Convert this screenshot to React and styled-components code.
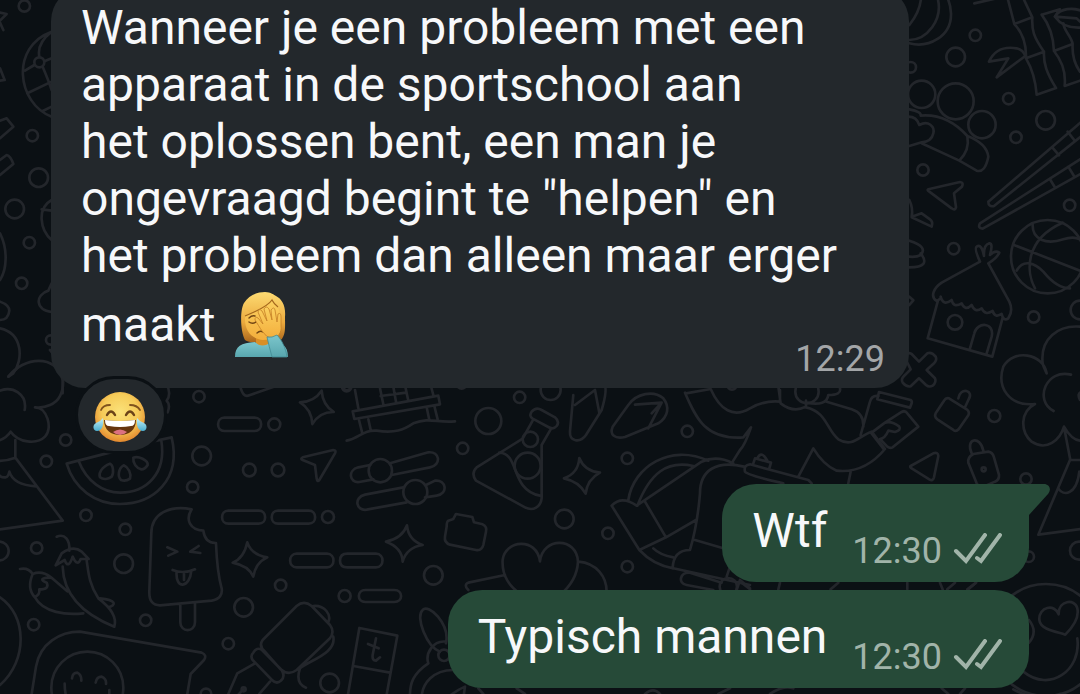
import styled, { createGlobalStyle } from "styled-components";

const GlobalStyle = createGlobalStyle`
  * {
    box-sizing: border-box;
  }

  body {
    margin: 0;
    background: #0b1014;
    font-family: Roboto, "Noto Sans", sans-serif;
  }
`;

const Chat = styled.main`
  position: relative;
  display: flex;
  flex-direction: column;
  justify-content: flex-end;
  height: 100vh;
  padding: 0 51px 6px;
  overflow: hidden;
`;

const Wallpaper = styled.svg`
  position: absolute;
  inset: 0;
  width: 100%;
  height: 100%;
  fill: none;
  stroke: #23262b;
  stroke-width: 8;
  stroke-linecap: round;
  stroke-linejoin: round;
`;

const Bubble = styled.article`
  position: relative;
  display: flex;
  flex-shrink: 0;
  border-radius: 34px;
  color: #f7f8fa;
`;

const Incoming = styled(Bubble)`
  flex-direction: column;
  margin-right: 120px;
  padding: 12px 24px 8px 30px;
  background: #23282c;
`;

const Outgoing = styled(Bubble)`
  align-self: flex-end;
  align-items: flex-end;
  gap: 25px;
  margin-top: 8px;
  padding: 18px 27px 23px 30px;
  background: #264a38;

  &.first {
    margin-top: 30px;
    border-top-right-radius: 0;
  }
`;

const Text = styled.p`
  margin: 0;
  font-size: 48px;
  line-height: 57px;
`;

const Line = styled.span`
  display: block;
`;

const Time = styled.time`
  color: #a1b4a9;
  font-size: 36px;
  line-height: 42px;
`;

const FloatingTime = styled(Time)`
  float: right;
  margin-top: 54px;
  color: #a3a6a8;
`;

const Meta = styled.footer`
  display: flex;
  align-items: center;
  gap: 11px;
  margin-bottom: -13px;
  color: #a1b4a9;
`;

const Tail = styled.svg`
  position: absolute;
  top: 0;
  left: 100%;
  width: 21px;
  height: 31px;
  fill: #264a38;
`;

const Ticks = styled.svg`
  width: 49px;
  height: 36px;
  fill: none;
  stroke: currentColor;
  stroke-width: 4;
  stroke-linecap: round;
`;

const Reaction = styled.button`
  position: relative;
  display: flex;
  flex-shrink: 0;
  align-self: flex-start;
  align-items: center;
  justify-content: center;
  width: 92px;
  height: 78px;
  margin: -12px 0 0 24px;
  padding: 3px 3px 0 0;
  border: 3px solid #0b1014;
  border-radius: 39px;
  background: #23282c;
`;

const FaceEmoji = styled.svg`
  width: 54px;
  height: 66px;
  margin: 8px 0 0 8px;
  vertical-align: -17px;
`;

const doodles = [
  {
    // lower left: melon, peppers, ice lolly, marker, speech bubble
    at: [0, 370],
    circles: [
      [597, 80, 17], [823, 163, 18], [605, 258, 28], [748, 300, 19], [834, 300, 19],
      [578, 351, 17], [197, 210, 17], [139, 274, 17], [258, 436, 17], [376, 478, 17],
      [110, 534, 17], [371, 581, 28], [-2, 543, 28], [101, 764, 17], [437, 751, 17],
      [731, 712, 28], [842, 646, 17], [1034, 678, 18], [984, 441, 18], [685, 821, 17],
      [989, 939, 28], [262, 953, 108], [618, 972, 16], [731, 958, 6],
    ],
    paths: [
      "M25 20L55 -8M150 -60C200 -10 205 85 150 105Q128 115 105 112C140 110 160 175 135 200C110 225 55 218 32 185Q15 210 -20 216",
      "M-10 66C40 42 82 75 74 120M46 210V263L188 452L0 478M-10 273Q20 273 46 263M-10 305Q0 325 17 322Q25 320 28 305Q40 345 108 349",
      "M200 281L340 245M470 212L515 202C545 330 460 402 360 402C285 402 222 355 200 281ZM236 273C260 335 310 368 360 368C440 368 500 310 484 212",
      "M330 281C305 290 295 310 300 322C310 330 325 328 335 320C342 310 340 285 330 281ZM371 286C355 295 352 320 363 330Q377 335 390 326C395 310 385 292 371 286ZM400 263C415 257 445 270 443 285Q435 298 424 298C410 295 398 280 400 263Z",
      "M498 40Q516 70 500 92Q512 105 503 127M720 45Q728 85 748 76L828 48M1025 45Q1040 75 1055 50",
      "M965 62Q968 105 1001 126Q960 125 937 162Q935 118 900 97Q943 95 965 62ZM742 517Q755 555 802 562Q767 578 760 620Q745 587 698 578Q732 565 742 517Z",
      "M673 143H764C790 143 790 183 764 183H673C648 183 648 143 673 143ZM685 422H776C802 422 802 461 776 461H685C660 461 660 422 685 422ZM834 422H926C952 422 952 461 926 461H834C809 461 809 422 834 422ZM890 551H981C1007 551 1007 592 981 592H890C864 592 864 551 890 551Z",
      "M908 262L1000 240Q1010 240 1005 250L958 330Q952 338 950 325L945 285L908 270Q900 266 908 262Z",
      "M575 418C510 405 454 430 454 490L448 665C447 695 460 706 480 706L635 692C660 688 668 672 665 655C655 620 650 570 648 519Q615 520 610 482C570 480 555 450 575 418ZM541 703V757C541 788 585 788 585 757V698M502 532L532 545L505 557M596 528L571 545L601 549M518 600Q550 613 585 598M530 604C525 660 570 655 574 602M552 612V630",
      "M170 500C195 490 210 510 208 542M167 586L185 550Q220 525 245 545L266 567H242Q232 592 218 560Q205 600 194 570ZM188 590C190 660 230 725 343 770Q355 730 295 685C265 640 265 600 260 572M300 685C350 690 350 705 325 712M60 597Q85 592 98 612M98 612C120 603 140 612 153 622Q108 625 140 638Q150 658 118 658Q120 675 104 681Q80 655 98 612ZM153 622L202 664M104 681C130 730 200 735 250 730",
      "M95 972L108 890C120 820 180 785 240 785L605 848Q622 855 612 870L572 912L562 972M216 925Q218 908 232 908Q245 915 244 932M287 938Q290 920 305 920Q320 927 318 942M194 941Q194 965 200 985M328 960V985",
      "M788 810L890 708Q912 690 935 708L990 765Q1005 785 990 805L890 900Q865 918 842 898L795 845Q775 828 788 810ZM760 848Q770 830 786 840L845 900Q857 920 843 932Q830 944 816 930L758 870Q750 858 760 848ZM940 708C975 705 995 735 985 757M1000 800C1010 850 930 870 900 895Q885 940 918 953M765 880L712 910L685 972M810 935L778 972M730 958L705 985",
      "M0 682C80 735 85 870 0 945",
    ],
  },
  {
    // middle: hut on stilts, sliders, flask, slippers
    at: [340, 370],
    circles: [
      [539, 82, 17], [445, 153, 39], [368, 235, 17], [571, 208, 23], [563, 287, 39],
      [121, 302, 35], [226, 366, 36], [673, 447, 28], [280, 616, 28], [632, 60, 30],
      [1042, 184, 17], [862, 265, 17], [804, 490, 17], [862, 590, 17],
      [312, 856, 17], [20, 50, 14], [365, 42, 14],
    ],
    paths: [
      "M38 124L295 77L300 103L43 147ZM45 60L55 115M120 55L130 103M160 50L168 95M196 50L204 88M272 45L280 75M122 78L198 68M57 150L67 190M85 148L92 180M260 112L268 150M283 108L293 148M20 212C60 205 65 180 110 182C165 190 190 180 220 160C270 140 290 160 345 154",
      "M90 285L55 292C22 300 28 340 58 336L100 328M150 280L265 247C300 243 305 285 270 292L155 315M190 352L75 374C40 382 48 424 80 419L200 397M258 345L285 332C320 328 325 372 290 377L255 382",
      "M575 125Q588 110 605 120L645 142Q660 155 650 168Q640 180 625 171L578 146Q566 138 575 125ZM578 152L548 206L410 292Q392 310 408 332L555 412C580 425 602 410 605 385V225L632 178M478 248C540 250 510 360 600 377",
      "M700 75L690 185C688 215 720 220 738 195L785 120C800 70 800 50 792 40M705 105L765 60L778 128M818 170L865 105C890 70 940 60 970 85C990 110 985 140 955 160L855 201C825 208 808 195 818 170ZM885 104L965 98L925 175M965 98L935 130",
      "M201 466Q205 510 248 525Q200 532 188 575Q186 532 138 515Q187 505 201 466ZM718 264Q733 303 780 308Q742 328 737 371Q718 335 672 325Q715 310 718 264Z",
      "M325 452L340 447L348 432L397 441L402 457L428 463Q442 470 438 485L430 525Q425 543 408 540L330 524Q312 518 315 500L320 470Q320 455 325 452Z",
      "M0 572Q0 551 22 551H108C134 551 134 592 108 592H22Q0 592 0 572ZM76 660H163C190 660 190 696 163 696H76C50 696 50 660 76 660Z",
      "M600 574C590 500 495 510 488 570C485 620 510 650 545 675M600 574C608 500 710 500 714 575C712 620 690 650 660 675M716 575C770 580 800 620 800 665M495 615L385 638Q370 645 385 660",
      "M58 774L172 797L138 985M58 774L22 985M40 888L150 908M108 805L98 855Q96 872 108 872L120 862M84 822L116 835",
      "M318 820C330 760 265 700 248 720C225 740 260 830 300 845M318 815C280 810 255 850 265 880C220 910 208 940 210 985M340 900C280 900 245 940 245 985M320 985Q350 960 375 950L370 985",
      "M415 955L430 972M530 955L555 972M915 972Q940 950 960 972",
    ],
  },
  {
    // helmet
    at: [590, 440],
    circles: [[415, 440, 26]],
    paths: [
      "M115 180C130 80 240 10 355 62M142 197C180 100 230 60 310 78M65 197Q95 165 140 197L335 65Q380 45 430 70M65 197L148 330L228 292L318 240M165 185L228 292M148 330Q190 375 250 385L480 435M190 325Q210 345 250 352M462 80C380 60 330 90 330 160C325 220 315 280 300 330Q250 330 248 385M315 300L400 325M395 428L300 398C270 395 262 430 290 435L370 450M410 410L420 380M440 450L450 420L480 445",
    ],
  },
  {
    // upper right: bamboo, bench, chopsticks
    at: [880, 0],
    circles: [
      [286, 106, 17], [227, 171, 28], [92, 202, 16], [125, 283, 41], [227, 304, 54],
      [306, 374, 41], [386, 296, 17], [497, 361, 28], [408, 412, 17], [129, 510, 17],
      [569, 616, 17],
    ],
    paths: [
      "M88 130C145 145 215 110 213 40Q212 15 203 -5M88 120C140 120 190 60 173 -5M88 75Q120 35 123 -5",
      "M283 10L345 -4M383 -5L403 72L457 52L430 -5M403 72Q440 110 438 175L492 155C460 110 455 90 457 52M438 175Q465 220 470 284L528 264C500 220 490 190 492 155M485 44L540 28Q530 40 525 50M485 44Q520 90 522 153L578 132C575 110 550 90 550 70M522 153Q560 200 554 258L600 242M578 132Q575 180 600 215",
      "M327 185Q350 135 410 145Q430 150 436 168L350 232L385 175ZM525 50C540 25 580 20 610 35M525 50L590 55L600 65M525 50Q550 85 600 83",
      "M88 328Q125 335 122 347Q200 340 262 408Q270 450 238 482L125 430M262 408Q320 430 325 470Q315 520 290 512L238 482M85 350Q110 350 118 375C145 360 165 380 160 400Q155 425 125 427L88 438",
      "M325 605L605 365M342 618L605 408M325 605Q325 622 342 618M517 442L537 466M563 395L585 423M300 670L605 475M308 686L605 520M300 670Q292 685 308 686M510 538L526 564M565 500L582 528",
      "M145 568L240 546Q252 547 246 560L222 580L228 622Q225 633 215 625L148 575Q140 570 145 568ZM88 600Q100 625 95 650L125 640L150 658Q160 665 155 680L95 652",
    ],
  },
  {
    // right edge: hut, basketball, tree, padlock
    at: [880, 220],
    circles: [
      [221, 86, 17], [503, 110, 110], [225, 307, 22], [461, 291, 17], [600, 270, 28],
      [343, 588, 18], [311, 748, 6], [438, 777, 17],
    ],
    paths: [
      "M402 75L600 152M458 10C455 60 500 75 550 58Q580 48 600 58M548 8C430 60 440 160 465 205M410 152C430 115 465 130 490 155Q530 205 570 205",
      "M300 125L185 188C160 205 150 230 170 243Q185 235 182 230Q190 260 215 240Q220 265 245 250Q255 275 275 255Q285 280 305 265Q315 288 338 273Q345 295 365 282Q370 305 385 295C395 280 395 260 388 245L325 130M300 125Q282 85 290 80Q305 70 312 108Q310 75 328 70Q340 70 330 105Q345 90 358 98Q350 115 325 130M173 245L143 355L337 410L368 293M270 385L283 340C290 305 345 305 335 350L320 400",
      "M88 62Q145 80 122 105Q110 112 88 110M122 100Q155 142 88 142M88 230L100 241L88 255",
      "M78 420L72 410Q82 395 95 402L117 425L142 400Q155 395 167 410Q172 420 162 430L140 450L165 475Q170 487 158 497Q147 503 138 495L117 475L92 499Q80 502 68 488Q62 478 72 468L92 448Z",
      "M207 535L260 568Q270 576 265 586L236 628Q228 636 220 630L172 598Q162 590 167 580L192 542Q198 532 207 535ZM235 535C240 500 285 510 265 540L255 562",
      "M92 738L160 700Q174 695 175 708L162 772Q158 785 148 778L95 745Q88 740 92 738ZM280 702L325 695Q338 697 342 712L357 765Q358 780 345 785L310 800Q295 800 290 790L265 728Q262 712 280 702ZM275 700C255 655 300 645 310 692",
      "M600 320C535 315 480 355 488 430Q490 440 500 460C490 400 400 385 370 440C350 500 385 560 465 552C420 575 420 635 455 665C500 695 540 660 552 620Q575 660 600 662M573 464C500 445 460 540 521 573M605 515Q590 520 600 540M552 620L571 720",
    ],
  },
  {
    // upper left: globe and clouds
    at: [0, 0],
    circles: [[73, 18, 17], [118, 187, 15], [97, 407, 17], [116, 533, 28], [44, 627, 28], [88, 728, 17], [65, 850, 17], [152, 1020, 14]],
    paths: [
      "M0 38L20 42L0 62M0 68L10 90M0 205L14 240L0 242M155 95C30 140 50 310 155 350M155 95Q110 130 118 170M133 184L155 175M103 195L75 212M128 200Q145 240 155 270M82 280L155 245M128 333L155 320",
      "M0 362L20 355L40 380L0 415M0 480L20 465Q32 468 40 492L0 525M0 700C25 750 20 810 0 840M0 905Q28 915 28 932Q25 960 0 960M155 600C110 625 120 690 155 720M125 628L155 632M155 850L145 872C105 885 105 930 155 936M0 985C70 1000 70 1080 40 1120L25 1130C70 1070 170 1060 188 1140V1180",
    ],
  },
  {
    // reader with outstretched arms
    at: [640, 370],
    circles: [[501, 65, 35], [276, 45, 14]],
    paths: [
      "M135 68C170 150 200 210 310 202L333 172Q315 225 300 240L278 275M138 70L212 57C240 120 280 145 330 115Q375 90 420 95L420 60M415 50L422 100Q460 130 498 110V92M498 112C560 125 560 180 595 208C640 235 660 195 695 185L735 237C695 285 645 308 590 302Q550 285 520 235L475 320M500 98Q560 110 565 75Q605 75 600 55M560 95L635 118Q672 130 670 170M632 305L625 340M662 195L690 95Q695 75 715 78",
      "M515 340L505 330L330 283Q310 285 315 305Q320 315 430 340M340 280L345 265L393 278L388 295M352 265Q365 240 382 272M693 188L732 238",
      "M717 66L812 90Q817 93 815 100L810 113L712 88ZM695 188L735 158Q755 152 778 170Q785 180 765 186L745 182Q735 205 720 207L742 230M735 158L785 126Q795 120 802 130L835 170L758 232Q750 236 742 230",
    ],
  },
  {
    // lower right: badge with heart, bottle
    at: [960, 440],
    circles: [[206, 350, 16], [357, 332, 27], [258, 600, 168]],
    paths: [
      "M330 60L235 284L362 267M330 60H362M295 145C310 170 350 165 358 95M296 523C285 490 235 500 238 540C242 570 290 575 316 584Q360 540 352 505C345 475 295 480 296 523ZM352 595C365 690 270 760 190 695M207 540Q235 575 207 608M160 748C210 775 270 785 300 762M22 448L48 428",
    ],
  },
  {
    // slivers between the green bubbles
    at: [700, 470],
    circles: [],
    paths: [
      "M125 338L150 358M240 338L235 358M415 338L392 358M622 338V358M720 338L728 358M765 338L742 358M828 338L805 358M55 672L90 655M210 672Q250 645 280 655M725 655L745 672M795 655L780 672",
    ],
  },
];

const lines = [
  "Wanneer je een probleem met een",
  "apparaat in de sportschool aan",
  "het oplossen bent, een man je",
  'ongevraagd begint te "helpen" en',
  "het probleem dan alleen maar erger",
];

const replies = [
  { text: "Wtf", time: "12:30" },
  { text: "Typisch mannen", time: "12:30" },
];

function Doodles() {
  return (
    <Wallpaper viewBox="0 0 1080 694" preserveAspectRatio="xMidYMid slice" aria-hidden="true">
      {doodles.map(({ at, circles, paths }) => (
        <g key={at.join()} transform={`translate(${at.join()}) scale(0.3333)`}>
          {circles.map(([x, y, r]) => (
            <circle key={`${x},${y}`} cx={x} cy={y} r={r} />
          ))}
          {paths.map((d) => (
            <path key={d} d={d} />
          ))}
        </g>
      ))}
    </Wallpaper>
  );
}

function Facepalm() {
  return (
    <FaceEmoji viewBox="0 0 54 66" role="img" aria-label="facepalm">
      <defs>
        <linearGradient id="hair" x1="0" y1="0" x2="0" y2="1">
          <stop offset="0" stopColor="#fddb72" />
          <stop offset="0.6" stopColor="#eba93d" />
          <stop offset="1" stopColor="#a9641a" />
        </linearGradient>
        <linearGradient id="hand" x1="0" y1="0" x2="0" y2="1">
          <stop offset="0" stopColor="#fbd060" />
          <stop offset="1" stopColor="#f3ae3c" />
        </linearGradient>
        <linearGradient id="shirt" x1="0" y1="0" x2="0" y2="1">
          <stop offset="0" stopColor="#7cc6cc" />
          <stop offset="1" stopColor="#58a6ae" />
        </linearGradient>
      </defs>
      <path fill="url(#hair)" d="M10 48C5 38 5 18 9 11C14 3 22 0 30 0C36 0 39 3 41 4C47 7 51 14 50 25C50 34 51 43 46 48L31 51Q14 51 10 48Z" />
      <path fill="#d98f26" d="M21 42H35V56H21Z" />
      <path fill="url(#hand)" d="M10 24C20 20 33 14 37 8C42 12 46 20 46 29C45 42 37 48 28 48C16 47 9 38 10 24Z" />
      <path fill="none" stroke="#a4671d" strokeWidth="1.2" d="M10 24C20 20 33 14 37 8Q39 12 43 15" />
      <path fill="none" stroke="#714514" strokeWidth="1.4" strokeLinecap="round" d="M14 30Q18 33 22 29M14 26Q17 23 20 24M22 41Q25 38 28 40" />
      <path fill="url(#shirt)" d="M0 65C0 54 6 51 20 50Q27 57 36 50C46 50 53 53 53 65Z" />
      <path
        fill="url(#hand)"
        stroke="#c47f26"
        strokeWidth="0.8"
        strokeLinejoin="round"
        d="M27 39C25 36 22 31 20 28Q20 24 23 26L28 32L23 20Q24 16 27 19L32 29L29 17Q31 13 34 17L37 28L36 18Q39 14 40 18L42 30L43 22Q46 20 46 25L46 34C47 40 43 46 37 47Q31 45 27 39Z"
      />
      <path fill="url(#shirt)" stroke="#438b94" strokeWidth="0.8" d="M32 45Q37 46 42 43C47 48 51 57 52 65H37Q34 54 32 45Z" />
    </FaceEmoji>
  );
}

function Joy() {
  return (
    <svg width="56" height="54" viewBox="0 0 56 54" role="img" aria-label="tears of joy">
      <defs>
        <radialGradient id="skin" cx="0.5" cy="0.4" r="0.6">
          <stop offset="0" stopColor="#fbe27a" />
          <stop offset="0.6" stopColor="#f6cb58" />
          <stop offset="1" stopColor="#e4892f" />
        </radialGradient>
        <linearGradient id="tear" x1="0" y1="0" x2="0" y2="1">
          <stop offset="0" stopColor="#c7f1f7" />
          <stop offset="1" stopColor="#4baed0" />
        </linearGradient>
      </defs>
      <circle cx="28" cy="27" r="25" fill="url(#skin)" />
      <path fill="none" stroke="#80531d" strokeWidth="1.8" strokeLinecap="round" d="M9 20Q11 15 18 15M38 15Q45 15 48 20" />
      <path fill="none" stroke="#6b4318" strokeWidth="2.4" strokeLinecap="round" d="M15 25Q19 18 23 25M34 25Q38 18 42 25" />
      <path fill="#65350d" d="M12 30Q28 32 44 30C44 40 37 45 28 45C19 45 12 40 12 30Z" />
      <path fill="#fff" d="M13 30Q28 32 43 30Q43 36 39 36Q28 38 17 36Q13 36 13 30Z" />
      <path fill="#dc7180" d="M21 42Q28 37 35 42Q32 45 28 45Q24 45 21 42Z" />
      <path fill="url(#tear)" d="M11 28C12 35 10 41 5 41C1 41 0 35 4 33Q9 31 11 28ZM45 28C44 35 46 41 51 41C55 41 56 35 52 33Q47 31 45 28Z" />
    </svg>
  );
}

function App() {
  return (
    <>
      <GlobalStyle />
      <Chat>
        <Doodles />
        <Incoming>
          <Text>
            {lines.map((line) => (
              <Line key={line}>{line}</Line>
            ))}
            <Line>
              maakt <Facepalm />
              <FloatingTime>12:29</FloatingTime>
            </Line>
          </Text>
        </Incoming>
        <Reaction type="button">
          <Joy />
        </Reaction>
        {replies.map(({ text, time }, i) => (
          <Outgoing key={text} className={i === 0 ? "first" : undefined}>
            {i === 0 && (
              <Tail viewBox="0 0 21 31">
                <path d="M-1 0H15C20 0 23 5 19 10L0 31H-1Z" />
              </Tail>
            )}
            <Text>{text}</Text>
            <Meta>
              <Time>{time}</Time>
              <Ticks viewBox="0 0 49 36" role="img" aria-label="delivered">
                <path d="M3 18L13 28L32 2M24 25L28 28L47 2" />
              </Ticks>
            </Meta>
          </Outgoing>
        ))}
      </Chat>
    </>
  );
}

export default App;
